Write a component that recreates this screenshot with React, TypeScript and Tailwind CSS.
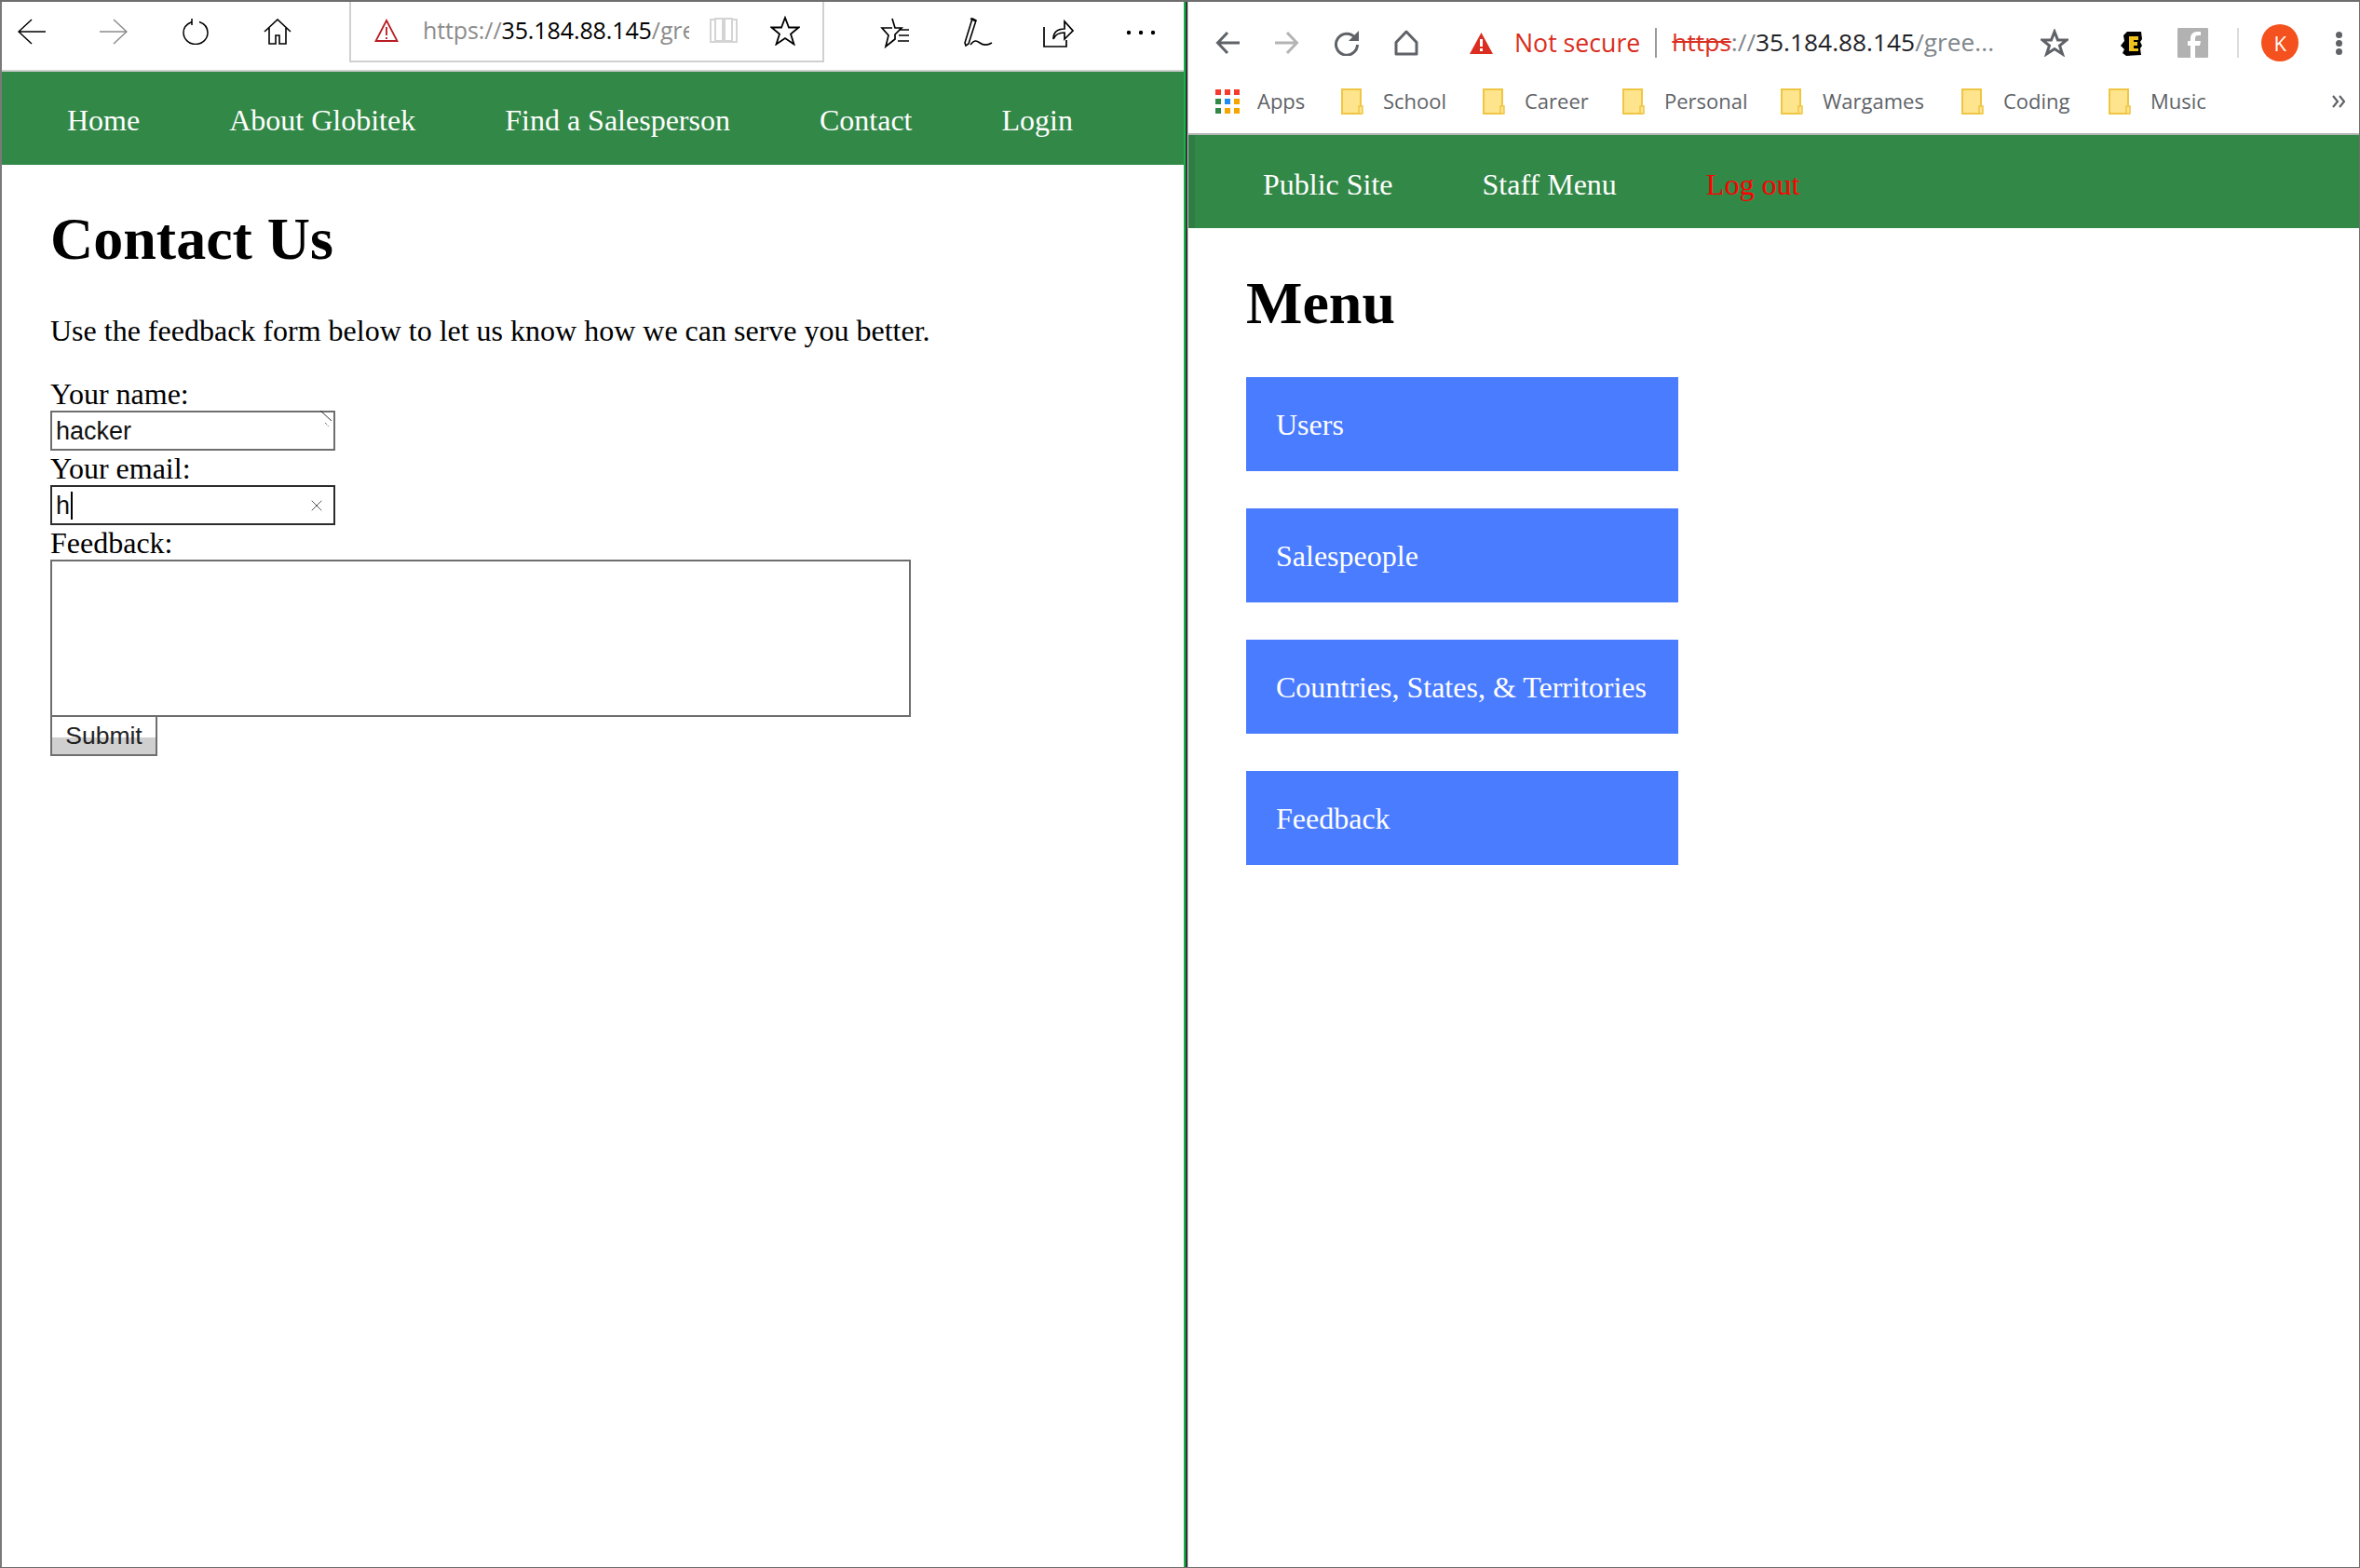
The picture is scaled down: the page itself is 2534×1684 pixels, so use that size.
import { X } from "lucide-react";

const SERIF = "font-['Liberation_Serif','Times_New_Roman',serif]";
const UI = "font-['Open_Sans','Noto_Sans',sans-serif]";

type NavProps = {
  items: { label: string; red?: boolean }[];
  pad: string;
};

const NavBar = ({ items, pad }: NavProps) => (
  <nav className={`flex h-[100px] shrink-0 items-center gap-[96px] bg-[#328847] ${pad} ${SERIF} text-[32px] text-white`}>
    {items.map((item) => (
      <a key={item.label} className={item.red ? "text-[#ff0000]" : ""}>
        {item.label}
      </a>
    ))}
  </nav>
);

const Folder = () => (
  <svg width="24" height="28" viewBox="0 0 24 28" className="shrink-0">
    <path d="M1 1h20v26H1z" fill="#fee48c" stroke="#eec644" strokeWidth="2" />
    <path d="M19 19h4v8h-4z" fill="#fee48c" stroke="#eec644" strokeWidth="1.5" />
  </svg>
);

const AppsGrid = () => {
  const colours = ["#f73a2e", "#f73a2e", "#f73a2e", "#328847", "#1e8bf0", "#f4a500", "#328847", "#f4a500", "#f4a500"];
  return (
    <div className="grid w-[26px] shrink-0 grid-cols-3 gap-x-[4px] gap-y-[4px]">
      {colours.map((c, i) => (
        <span key={i} className="h-[6px] w-[6px]" style={{ background: c }} />
      ))}
    </div>
  );
};

const Bookmark = ({ label, w }: { label: string; w: string }) => (
  <div className={`flex shrink-0 items-center gap-[21px] ${w}`}>
    <Folder />
    <span>{label}</span>
  </div>
);

const EdgeToolbar = () => (
  <header className="flex h-[75px] shrink-0 items-start border-b-2 border-[#d0d0d0] bg-white">
    <div className="flex h-[73px] w-[373px] shrink-0 items-center pb-[10px] pl-[17px] text-black">
      <svg width="30" height="28" viewBox="0 0 30 28" fill="none" stroke="currentColor" strokeWidth="1.5">
        <path d="M30 14H1M15 1 1 14l14 13" />
      </svg>
      <svg width="30" height="28" viewBox="0 0 30 28" fill="none" stroke="#8c8c8c" strokeWidth="1.5" className="ml-[58px]">
        <path d="M0 14h29M15 1l14 13-14 13" />
      </svg>
      <svg width="28" height="28" viewBox="0 0 28 28" fill="none" stroke="currentColor" strokeWidth="1.5" className="ml-[59px]">
        <path d="M10 3.500C5 5.500 1 9.500 1 15a13 12.500 0 0 0 26 0c0-5.500-3.500-9.500-9-11.500M10 0v7" />
      </svg>
      <svg width="30" height="28" viewBox="0 0 30 28" fill="none" stroke="currentColor" strokeWidth="1.6" className="ml-[59px]">
        <path d="M1 14 15 1l14 13M6 10v17h7v-9h4v9h7V10" />
      </svg>
    </div>
    <div className={`flex h-[65px] w-[510px] shrink-0 items-center border-x-2 border-b-2 border-[#d0d0d0] pb-[1px] pl-[25px] ${UI} text-[25px]`}>
      <svg width="26" height="26" viewBox="0 0 26 26" fill="none" className="shrink-0">
        <path d="M13 2 1.500 24h23z" stroke="#b81d22" strokeWidth="1.800" />
        <path d="M13 9v9M13 20v2" stroke="#b81d22" strokeWidth="1.800" />
      </svg>
      <span className="ml-[26px] w-[286px] overflow-hidden whitespace-nowrap tracking-[-0.1px] text-[#8c8c8c]">
        https://<span className="text-black">35.184.88.145</span>/gre
      </span>
      <svg width="30" height="30" viewBox="0 0 30 30" fill="none" stroke="#d4d4d4" strokeWidth="2" className="ml-[22px] shrink-0">
        <path d="M1 3h5v24H1zM6 2h8v24H6zM16 2h8v24h-8zM24 3h5v24h-5zM1 27h28" />
      </svg>
      <svg width="32" height="32" viewBox="0 0 32 32" fill="none" stroke="#000" strokeWidth="1.800" className="ml-[35px] shrink-0">
        <path d="M16 2l4 10.500h10.500l-8.500 7 3.500 11L16 24 6.500 30.500l3.500-11-8.500-7H12z" />
      </svg>
    </div>
    <div className="flex h-[73px] items-center pb-[8px] pl-[60px] text-black">
      <svg width="32" height="34" viewBox="0 0 32 34" fill="none" stroke="currentColor" strokeWidth="1.700">
        <path d="M13 2l3 10h7l-7 7v5l-10 8 3-12L2 12h11M20 14h11M20 20h11M19 26h12" />
      </svg>
      <svg width="32" height="34" viewBox="0 0 32 34" fill="none" stroke="currentColor" strokeWidth="1.600" className="ml-[57px]">
        <path d="M10 2 2 28l1 3 3-2L14 4zM8 2l6 3M8 30c4-5 6-5 10-2s8 3 13 0" />
      </svg>
      <svg width="34" height="34" viewBox="0 0 34 34" fill="none" stroke="currentColor" strokeWidth="1.700" className="ml-[53px]">
        <path d="M2 11v21h24v-7M12 24c0-8 5-11 12-11V5l9 10-9 9v-7c-5 0-10 2-12 7z" />
      </svg>
      <svg width="32" height="6" viewBox="0 0 32 6" fill="currentColor" className="ml-[56px]">
        <circle cx="3" cy="3" r="2.200" />
        <circle cx="16" cy="3" r="2.200" />
        <circle cx="29" cy="3" r="2.200" />
      </svg>
    </div>
  </header>
);

const ChromeToolbar = () => (
  <header className={`h-[143px] shrink-0 border-b-2 border-[#b5b5b5] bg-white ${UI}`}>
    <div className="flex h-[88px] items-center pl-[29px] text-[#5f6368]">
      <svg width="26" height="26" viewBox="0 0 26 26" fill="none" stroke="currentColor" strokeWidth="3" className="shrink-0">
        <path d="M26 13H3M13 2 2.500 13 13 24" />
      </svg>
      <svg width="26" height="26" viewBox="0 0 26 26" fill="none" stroke="#b4b4b4" strokeWidth="3" className="ml-[38px] shrink-0">
        <path d="M0 13h23M13 2l10.500 11L13 24" />
      </svg>
      <svg width="28" height="28" viewBox="0 0 28 28" fill="none" className="ml-[37px] shrink-0">
        <path d="M23 8.500A11.500 11.500 0 1 0 25.500 16" stroke="currentColor" strokeWidth="3" />
        <path d="M27 1v11H16z" fill="currentColor" />
      </svg>
      <svg width="26" height="28" viewBox="0 0 26 28" fill="none" stroke="currentColor" strokeWidth="3" strokeLinejoin="round" className="ml-[37px] shrink-0">
        <path d="M13 2 2 13.500V26h22V13.500z" />
      </svg>
      <svg width="25" height="23" viewBox="0 0 25 23" className="ml-[55px] shrink-0">
        <path d="M12.500 0 25 23H0z" fill="#d92e20" />
        <path d="M11 7h3v8h-3zM11 17h3v3h-3z" fill="#fff" />
      </svg>
      <span className="ml-[23px] text-[26.7px] text-[#d92e20]">Not secure</span>
      <span className="ml-[16px] h-[32px] w-[2px] bg-[#9a9a9a]" />
      <span className="ml-[16px] w-[358px] shrink-0 overflow-hidden text-[26.3px] whitespace-nowrap text-[#80868b]">
        <span className="text-[#d92e20] line-through">https</span>://<span className="text-[#202124]">35.184.88.145</span>/gree...
      </span>
      <svg width="30" height="30" viewBox="0 0 30 30" fill="none" stroke="currentColor" strokeWidth="3" className="ml-[38px] shrink-0">
        <path d="M15 3l3.500 9H28l-7.500 6 3 9L15 21.500 6.500 27l3-9L2 12h9.500z" />
      </svg>
      <svg width="23" height="27" viewBox="0 0 23 27" className="ml-[56px] shrink-0">
        <path d="M7 1h15l1 8-2 3 2 4-2 3 1 7-16 1-4-3 2-4-4-4 4-5-1-6z" fill="#000" />
        <path d="M9 6h10v4h-5v2h4v4h-4v3h5v3H9z" fill="#efc21e" />
      </svg>
      <svg width="33" height="32" viewBox="0 0 33 32" className="ml-[38px] shrink-0">
        <rect width="33" height="32" rx="1" fill="#b2b2b2" />
        <path d="M19 32V19h5l1-5h-6v-3c0-2 1-3 3-3h3V4h-4c-4 0-7 3-7 7v3h-3v5h3v13z" fill="#fff" />
      </svg>
      <span className="ml-[31px] h-[32px] w-[2px] bg-[#dcdcdc]" />
      <span className="ml-[24px] flex h-[40px] w-[40px] shrink-0 items-center justify-center rounded-full bg-[#f4511e] text-[22px] text-white">
        K
      </span>
      <div className="ml-[40px] flex h-[25px] w-[7px] shrink-0 flex-col justify-between">
        <span className="h-[7px] w-[7px] rounded-full bg-[#5f6368]" />
        <span className="h-[7px] w-[7px] rounded-full bg-[#5f6368]" />
        <span className="h-[7px] w-[7px] rounded-full bg-[#5f6368]" />
      </div>
    </div>
    <div className="flex h-[53px] items-center pb-[16px] pl-[29px] text-[22px] text-[#5f6368]">
      <div className="flex w-[135px] shrink-0 items-center gap-[19px]">
        <AppsGrid />
        <span>Apps</span>
      </div>
      <Bookmark label="School" w="w-[152px]" />
      <Bookmark label="Career" w="w-[150px]" />
      <Bookmark label="Personal" w="w-[170px]" />
      <Bookmark label="Wargames" w="w-[194px]" />
      <Bookmark label="Coding" w="w-[158px]" />
      <Bookmark label="Music" w="w-[240px]" />
      <svg width="14" height="14" viewBox="0 0 14 14" fill="none" stroke="currentColor" strokeWidth="2.200" className="shrink-0">
        <path d="M1 1l5 6-5 6M8 1l5 6-5 6" />
      </svg>
    </div>
  </header>
);

const Field = ({ value, active }: { value: string; active?: boolean }) => (
  <div
    className={`relative flex h-[43px] w-[306px] items-center border-2 pt-[1px] pl-[4px] font-['Liberation_Sans',Arial,sans-serif] text-[27px] text-[#111] ${active ? "border-[#2c2c2c]" : "border-[#6e6e6e]"}`}
  >
    {value}
    {active && <span className="ml-[1px] h-[30px] w-[2px] bg-black" />}
    {active && <X size={20} strokeWidth={1.2} className="absolute right-[8px] text-[#555]" />}
    {!active && (
      <svg width="14" height="20" viewBox="0 0 14 20" className="absolute -top-[2px] right-0" fill="none" stroke="#333">
        <path d="M0 0l12 11" />
        <path d="M5 13l4 4" strokeDasharray="1 1" />
      </svg>
    )}
  </div>
);

const ContactPanel = () => (
  <main className={`flex-1 bg-white pt-[43px] pl-[52px] ${SERIF} text-black`}>
    <h1 className="text-[64px] leading-[74px] font-bold">Contact Us</h1>
    <p className="mt-[43px] text-[32px] leading-[37px]">Use the feedback form below to let us know how we can serve you better.</p>
    <form className="mt-[31px] flex flex-col items-start text-[32px] leading-[36px]">
      <label>Your name:</label>
      <Field value="hacker" />
      <label className="mt-[1px]">Your email:</label>
      <Field value="h" active />
      <label className="mt-[1px]">Feedback:</label>
      <div className="h-[169px] w-[924px] border-2 border-[#6e6e6e]" />
      <button
        type="button"
        className="-mt-[2px] h-[44px] w-[115px] border-2 border-[#6e6e6e] bg-[linear-gradient(#fff_0,#fff_55%,#cfcfcf_55%,#cfcfcf_100%)] font-['Liberation_Sans',Arial,sans-serif] text-[26.5px] leading-none text-[#222]"
      >
        Submit
      </button>
    </form>
  </main>
);

const MenuPanel = () => (
  <main className={`flex-1 bg-white pt-[44px] pl-[62px] ${SERIF}`}>
    <h1 className="text-[64px] leading-[74px] font-bold text-black">Menu</h1>
    <ul className="mt-[42px] flex flex-col gap-[40px]">
      {["Users", "Salespeople", "Countries, States, & Territories", "Feedback"].map((item) => (
        <li key={item} className="flex h-[101px] w-[464px] items-center bg-[#4a7cff] pl-[32px] text-[32px] text-white">
          {item}
        </li>
      ))}
    </ul>
  </main>
);

export default function App() {
  return (
    <div className="flex h-[1684px] w-[2534px] border-t-2 border-r border-b border-[#6e6e6e] bg-white">
      <section className="flex w-[1271px] shrink-0 flex-col border-l-2 border-[#7a7a7a]">
        <EdgeToolbar />
        <NavBar
          pad="pt-[4px] pl-[70px]"
          items={[{ label: "Home" }, { label: "About Globitek" }, { label: "Find a Salesperson" }, { label: "Contact" }, { label: "Login" }]}
        />
        <ContactPanel />
      </section>
      <div className="w-[2px] shrink-0 bg-[#12b548]" />
      <div className="w-[2px] shrink-0 bg-[#333333]" />
      <section className="flex min-w-0 flex-1 flex-col border-l border-[#c8c8c8]">
        <ChromeToolbar />
        <NavBar
          pad="border-l-[7px] border-[#2f7d43] pt-[6px] pl-[73px]"
          items={[{ label: "Public Site" }, { label: "Staff Menu" }, { label: "Log out", red: true }]}
        />
        <MenuPanel />
      </section>
    </div>
  );
}
